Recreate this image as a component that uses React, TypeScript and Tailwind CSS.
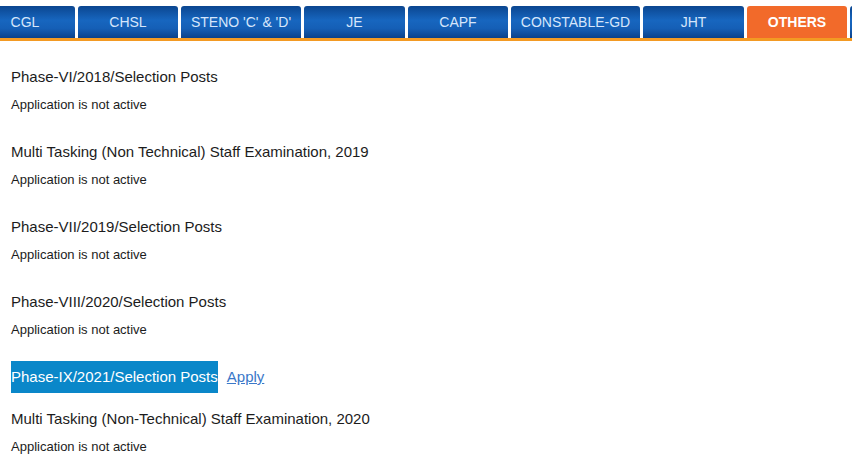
import React from "react";

const tabs = [
  { label: "CGL", width: "w-[100px]" },
  { label: "CHSL", width: "w-[100px]" },
  { label: "STENO 'C' & 'D'", width: "w-[120px]" },
  { label: "JE", width: "w-[101px]" },
  { label: "CAPF", width: "w-[100px]" },
  { label: "CONSTABLE-GD", width: "w-[129px]" },
  { label: "JHT", width: "w-[101px]" },
  { label: "OTHERS", width: "w-[100px]", active: true },
  { label: "", width: "w-[100px]" },
];

type Exam = {
  title: string;
  apply?: boolean;
};

const exams: Exam[] = [
  { title: "Phase-VI/2018/Selection Posts" },
  { title: "Multi Tasking (Non Technical) Staff Examination, 2019" },
  { title: "Phase-VII/2019/Selection Posts" },
  { title: "Phase-VIII/2020/Selection Posts" },
  { title: "Phase-IX/2021/Selection Posts", apply: true },
  { title: "Multi Tasking (Non-Technical) Staff Examination, 2020" },
];

export default function App() {
  return (
    <div className="h-[464px] w-[852px] overflow-hidden bg-white font-['Liberation_Sans',Arial,sans-serif]">
      <div className="pt-[6px]">
        <div className="flex gap-[3px] ml-[-25px] border-b-[3px] border-[#f39a23] h-[35px]">
          {tabs.map((tab, i) => (
            <div
              key={i}
              className={
                tab.active
                  ? `${tab.width} shrink-0 h-[32px] rounded-t-[3px] bg-[#f26a2a] flex items-center justify-center text-[14px] font-bold text-white`
                  : `${tab.width} shrink-0 h-[32px] rounded-t-[3px] bg-[linear-gradient(to_bottom,#0b4690,#1766bf_45%,#155fb6_70%,#0a418a)] flex items-center justify-center text-[14px] text-[#d6e6fb]`
              }
            >
              {tab.label}
            </div>
          ))}
        </div>
      </div>

      <div className="pt-[20px] px-[11px]">
        {exams.map((exam) =>
          exam.apply ? (
            <div key={exam.title} className="flex items-center mb-[10px]">
              <span className="h-[32px] leading-[32px] bg-[#0a87c9] text-[15px] text-white">
                {exam.title}
              </span>
              <a href="#" className="ml-[9px] text-[15px] text-[#3a78c9] underline">
                Apply
              </a>
            </div>
          ) : (
            <div key={exam.title} className="mb-[21px]">
              <div className="h-[32px] leading-[32px] text-[15px] text-[#1c1c1c]">
                {exam.title}
              </div>
              <div className="mt-[2px] leading-[20px] text-[13px] text-[#1c1c1c]">
                Application is not active
              </div>
            </div>
          )
        )}
      </div>
    </div>
  );
}
